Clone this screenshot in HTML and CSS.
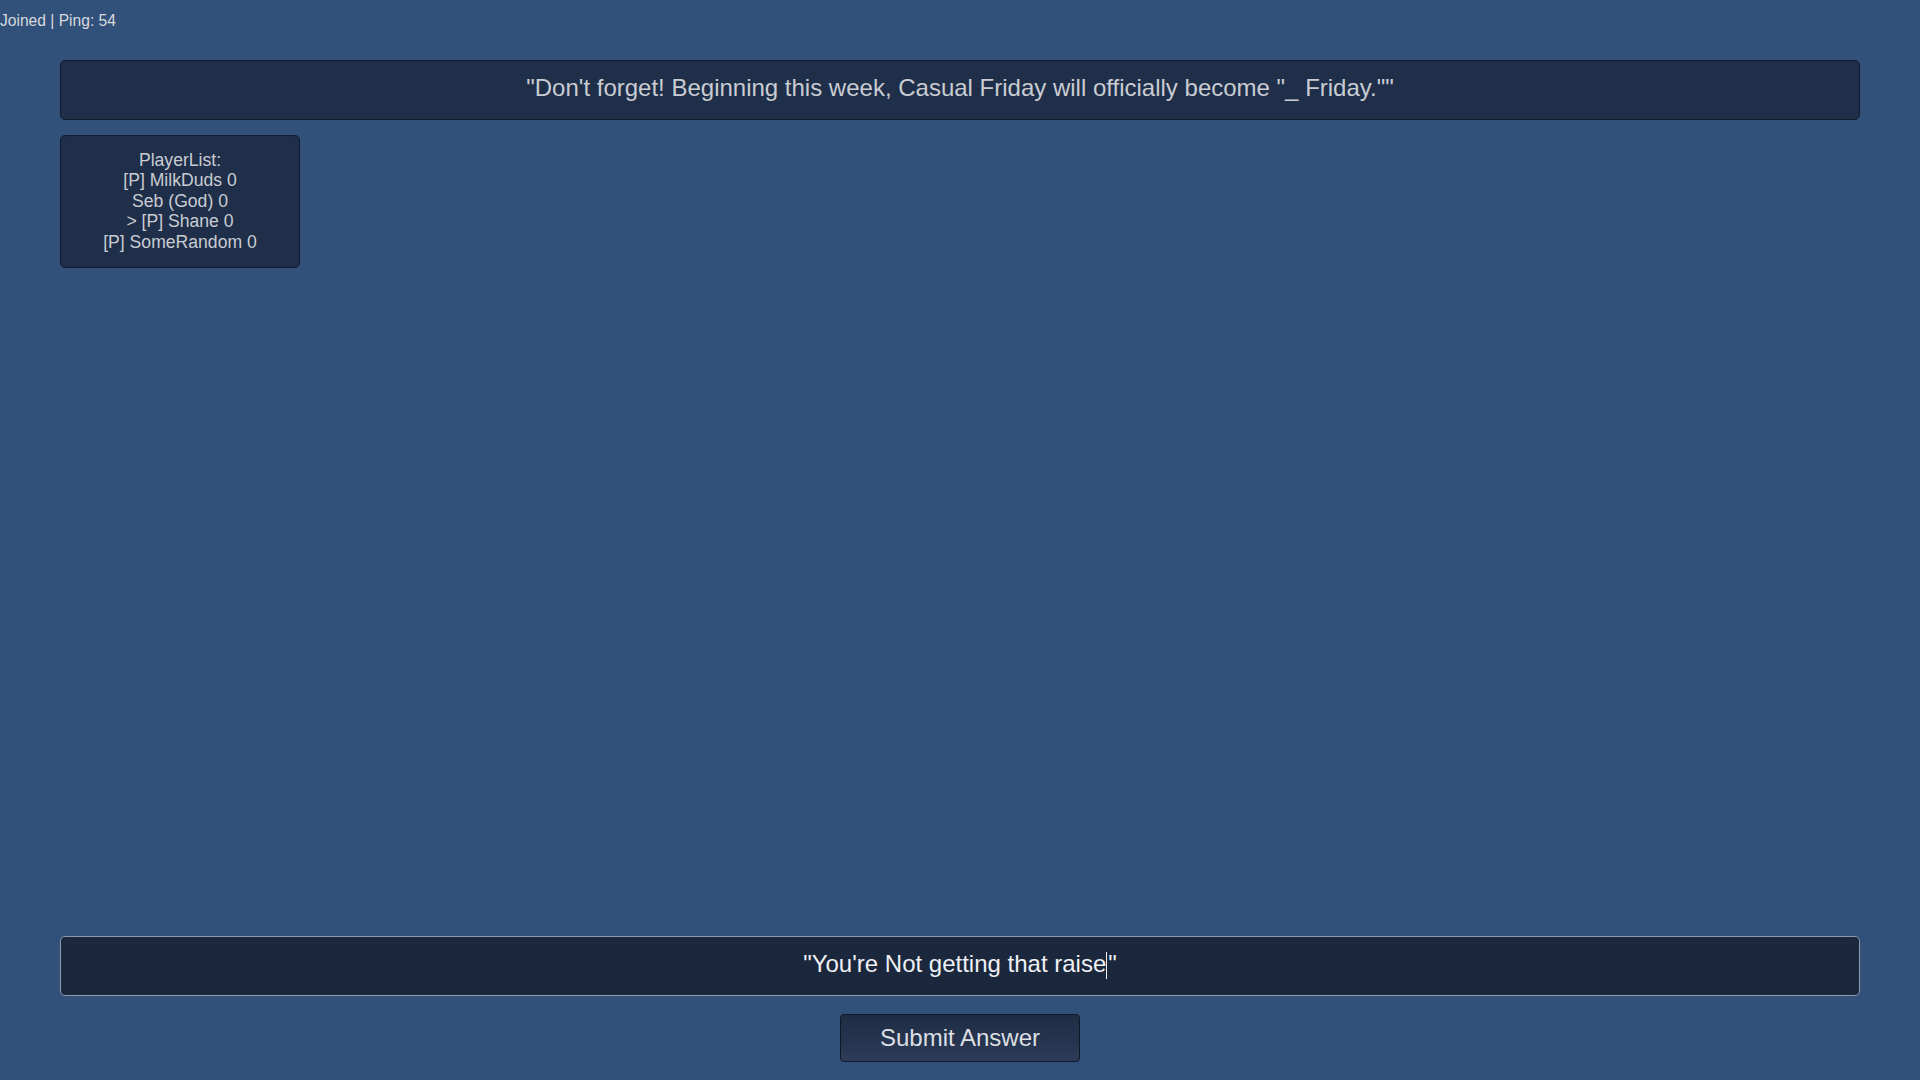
FILE: index.html
```html
<!DOCTYPE html>
<html lang="en">
<head>
<meta charset="utf-8">
<title>Game</title>
<link rel="stylesheet" href="styles.css">
</head>
<body>
<div class="status">Joined | Ping: 54</div>
<main class="stage">
  <div class="prompt">"Don't forget! Beginning this week, Casual Friday will officially become "_ Friday.""</div>
  <div class="players">
    <div>PlayerList:</div>
    <div>[P] MilkDuds 0</div>
    <div>Seb (God) 0</div>
    <div>&gt; [P] Shane 0</div>
    <div>[P] SomeRandom 0</div>
  </div>
  <div class="spacer"></div>
  <div class="answer">"You're Not getting that raise<span class="caret"></span>"</div>
  <div class="actions">
    <button class="submit" type="button">Submit Answer</button>
  </div>
</main>
</body>
</html>
```
FILE: styles.css
```css
html, body {
  margin: 0;
  padding: 0;
}
body {
  width: 1920px;
  height: 1080px;
  background: #31507a;
  font-family: "Liberation Sans", Arial, sans-serif;
  color: #d2d4d8;
  display: flex;
  flex-direction: column;
  overflow: hidden;
}
.status {
  font-size: 15.6px;
  line-height: 20px;
  padding-top: 11px;
  color: #d8dade;
  white-space: nowrap;
}
.stage {
  flex: 1;
  display: flex;
  flex-direction: column;
  margin: 29px 60px 18px 60px;
}
.prompt {
  box-sizing: border-box;
  height: 60px;
  background: #1f2f4a;
  border: 1px solid #121b2b;
  border-radius: 5px;
  display: flex;
  align-items: center;
  justify-content: center;
  font-size: 24px;
  color: #c9ccd2;
  padding-bottom: 4px;
}
.players {
  box-sizing: border-box;
  margin-top: 15px;
  width: 240px;
  height: 133px;
  background: #1f2f4a;
  border: 1px solid #121b2b;
  border-radius: 5px;
  text-align: center;
  font-size: 17.6px;
  line-height: 20.4px;
  color: #c9ccd2;
  padding-top: 14px;
}
.spacer {
  flex: 1;
}
.answer {
  box-sizing: border-box;
  height: 60px;
  background: #1a273d;
  border: 1px solid #8c9ab2;
  border-radius: 5px;
  display: flex;
  align-items: center;
  justify-content: center;
  font-size: 24px;
  color: #eef0f3;
  padding-bottom: 4px;
}
.caret {
  display: inline-block;
  width: 1px;
  height: 27px;
  background: #eef0f3;
  margin: 0 1px 0 0;
  transform: translateY(1px);
}
.actions {
  display: flex;
  justify-content: center;
  margin-top: 18px;
}
.submit {
  box-sizing: border-box;
  width: 240px;
  height: 48px;
  border: 1px solid #101828;
  border-radius: 4px;
  background: linear-gradient(#1e2c44, #2c3b57);
  color: #dcdfe4;
  font-family: "Liberation Sans", Arial, sans-serif;
  font-size: 24px;
  padding: 0;
  cursor: pointer;
}
```
